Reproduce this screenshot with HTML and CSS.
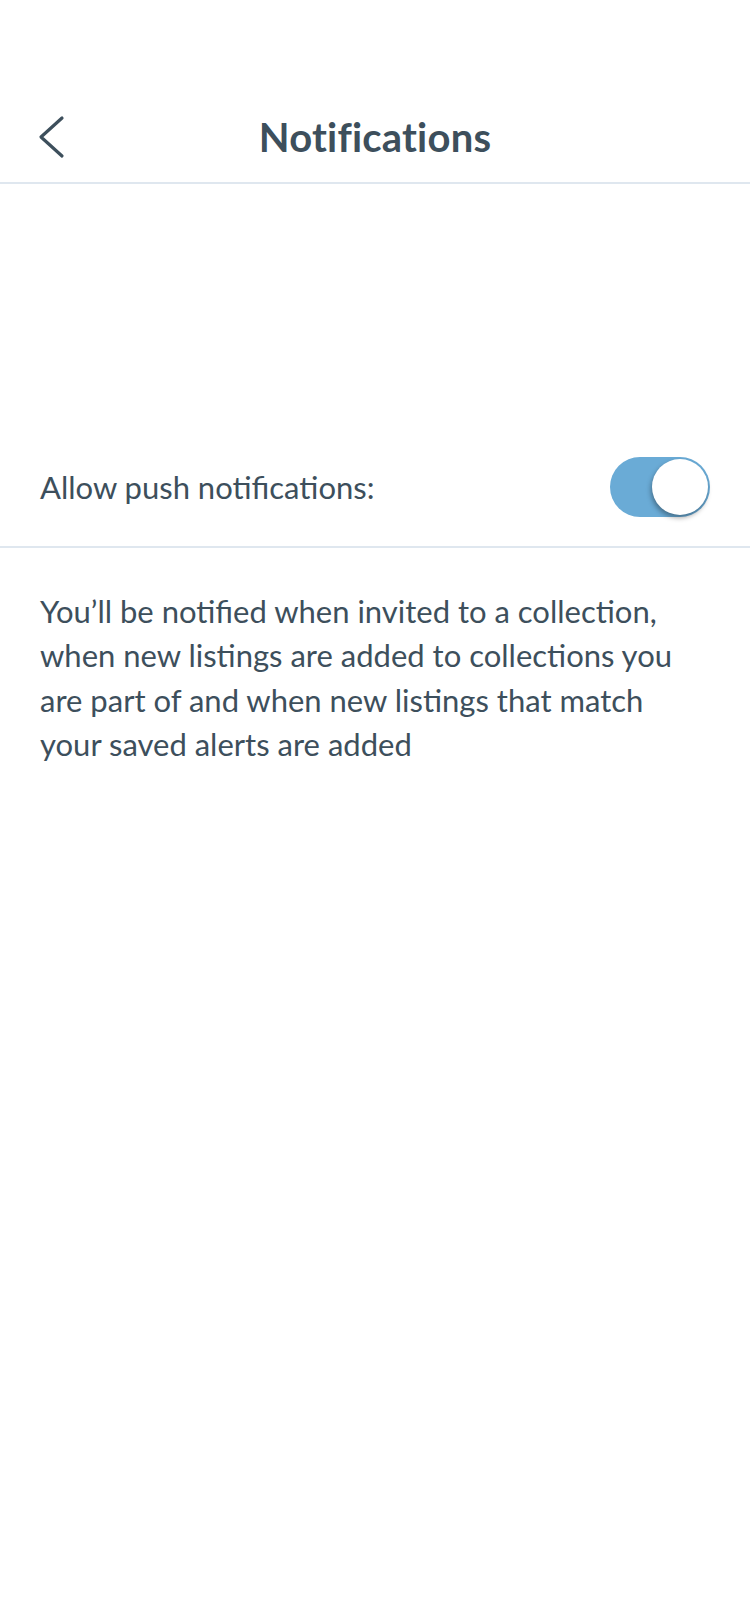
FILE: index.html
```html
<!DOCTYPE html>
<html>
<head>
<meta charset="utf-8">
<link rel="stylesheet" href="styles.css">
</head>
<body>
<div class="screen">
  <div class="statusbar"></div>
  <header class="header">
    <button class="back" aria-label="Back">
      <svg width="30" height="44" viewBox="0 0 30 44"><path d="M27 3 L6 22 L27 41" fill="none" stroke="#3d4f5c" stroke-width="3.2" stroke-linecap="round" stroke-linejoin="round"/></svg>
    </button>
    <h1 class="title">Notifications</h1>
  </header>
  <main class="content">
    <div class="row">
      <span class="label">Allow push notifications:</span>
      <div class="toggle on"><div class="knob"></div></div>
    </div>
    <p class="desc">You’ll be notified when invited to a collection, when new listings are added to collections you are part of and when new listings that match your saved alerts are added</p>
  </main>
</div>
</body>
</html>
```
FILE: styles.css
```css
html, body { margin: 0; padding: 0; background: #fff; }
body { font-family: Lato, "Noto Sans", sans-serif; color: #3d4f5c; }
.screen { width: 750px; min-height: 1624px; }
.statusbar { height: 92px; }
.header { position: relative; height: 90px; border-bottom: 2px solid #dfe7ef; display: flex; align-items: center; justify-content: center; }
.back { position: absolute; left: 35px; top: 23px; background: none; border: 0; padding: 0; width: 30px; height: 44px; display: flex; }
.title { margin: 0; font-size: 40px; font-weight: 700; letter-spacing: 0.2px; }
.content { padding-top: 244px; }
.row { height: 118px; border-bottom: 2px solid #dfe7ef; display: flex; align-items: center; justify-content: space-between; padding: 0 40px 0 40px; }
.label { font-size: 31px; }
.toggle { width: 100px; height: 60px; border-radius: 30px; background: #6aabd6; position: relative; }
.knob { position: absolute; right: 2px; top: 2px; width: 56px; height: 56px; border-radius: 50%; background: #fff; box-shadow: -1px 3px 5px rgba(0,0,0,0.35); }
.desc { margin: 0; padding: 41px 40px 0 40px; font-size: 31px; line-height: 44.3px; }
```
